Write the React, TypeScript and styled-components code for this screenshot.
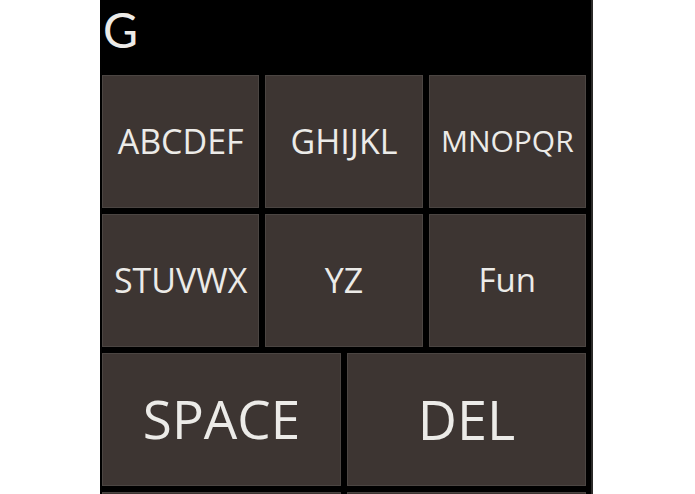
import React from "react";
import styled, { createGlobalStyle } from "styled-components";

const Global = createGlobalStyle`
  html, body { margin: 0; padding: 0; background: #ffffff; }
  body { width: 695px; height: 494px; overflow: hidden; }
  #root { height: 494px; }
`;

const Page = styled.div`
  display: flex;
  justify-content: flex-start;
  height: 494px;
  padding-left: 100px;
  box-sizing: border-box;
`;

const Panel = styled.div`
  width: 493px;
  height: 494px;
  background: #000;
  border-right: 2px solid #2c2a29;
  box-sizing: border-box;
  display: flex;
  flex-direction: column;
  overflow: hidden;
  font-family: "Open Sans", "Noto Sans", sans-serif;
  color: #ecebe8;
`;

const Header = styled.div`
  height: 75px;
  flex: none;
  box-sizing: border-box;
  padding: 1px 0 0 3px;
  font-family: Lato, "Open Sans", sans-serif;
  font-size: 48px;
  line-height: 58px;
  font-weight: 400;
`;

const Grid = styled.div`
  display: grid;
  grid-template-columns: repeat(6, 1fr);
  grid-auto-rows: 133px;
  column-gap: 6px;
  row-gap: 6px;
  padding: 0 5px 0 2px;
`;

const Key = styled.div<{ $span: number; $size: number }>`
  grid-column: span ${(p) => p.$span};
  background: #3d3532;
  border: 1px solid #4b4542;
  box-sizing: border-box;
  display: flex;
  align-items: center;
  justify-content: center;
  padding-bottom: 2px;
  font-size: ${(p) => p.$size}px;
  white-space: nowrap;
`;

const keys: { label: string; span: number; size: number }[] = [
  { label: "ABCDEF", span: 2, size: 34 },
  { label: "GHIJKL", span: 2, size: 34 },
  { label: "MNOPQR", span: 2, size: 30 },
  { label: "STUVWX", span: 2, size: 34 },
  { label: "YZ", span: 2, size: 34 },
  { label: "Fun", span: 2, size: 33 },
  { label: "SPACE", span: 3, size: 53 },
  { label: "DEL", span: 3, size: 54 },
  { label: "", span: 3, size: 34 },
  { label: "", span: 3, size: 34 },
];

export default function App() {
  return (
    <>
      <Global />
      <Page>
        <Panel>
          <Header>G</Header>
          <Grid>
            {keys.map((k, i) => (
              <Key key={i} $span={k.span} $size={k.size}>
                {k.label}
              </Key>
            ))}
          </Grid>
        </Panel>
      </Page>
    </>
  );
}
